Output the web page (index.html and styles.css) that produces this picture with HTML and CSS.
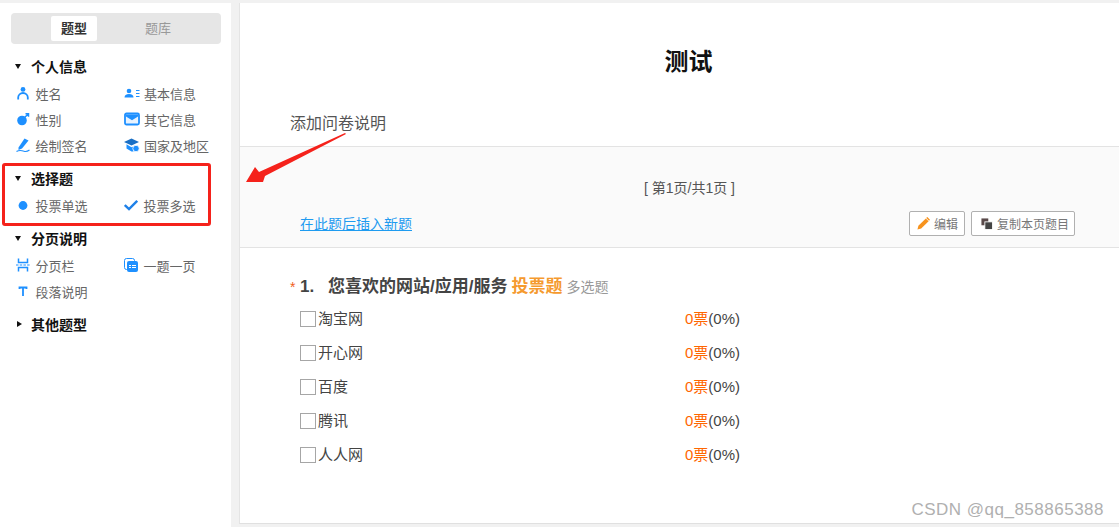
FILE: index.html
```html
<!DOCTYPE html>
<html lang="zh">
<head>
  <meta charset="UTF-8">
  <title>测试</title>
  <link rel="stylesheet" href="styles.css">
</head>
<body>
  <div class="page">
    <aside class="side">
      <div class="tabs">
        <span class="tab tab-on">题型</span>
        <span class="tab">题库</span>
      </div>

      <div class="group-title"><i class="tri"></i>个人信息</div>
      <div class="types">
        <div class="type">
          <svg class="ico" viewBox="0 0 14 14"><circle cx="7" cy="3.4" r="2.4" fill="#1e90ff"/><path d="M2.2 13.5V11.5a4.8 4.5 0 0 1 9.6 0v2" fill="none" stroke="#1e90ff" stroke-width="1.8"/></svg>
          姓名
        </div>
        <div class="type">
          <svg class="ico ico-wide" viewBox="0 0 16 14"><circle cx="5" cy="5" r="2.3" fill="#1e90ff"/><path d="M0.5 11.5a4.5 3.5 0 0 1 9 0z" fill="#1e90ff"/><path d="M12 4.5h3.5M12 7.5h3.5M12 10.5h3.5" stroke="#1e90ff" stroke-width="1.2"/></svg>
          基本信息
        </div>
        <div class="type">
          <svg class="ico" viewBox="0 0 14 14"><circle cx="6" cy="8.5" r="4.8" fill="#1e90ff"/><path d="M8.5 5.5L12 2.2M9.5 1.8h3v3" fill="none" stroke="#1e90ff" stroke-width="1.5"/></svg>
          性别
        </div>
        <div class="type">
          <svg class="ico ico-wide" viewBox="0 0 16 14"><rect x="1" y="1.5" width="14" height="11" rx="1.5" fill="#e8f3ff" stroke="#1e90ff" stroke-width="1.8"/><path d="M2 2.5H14V4.5L8 8.2L2 4.5z" fill="#1e90ff"/></svg>
          其它信息
        </div>
        <div class="type">
          <svg class="ico" viewBox="0 0 14 14"><path d="M2.5 9.5L8.5 0.5L12.5 2.5L6 10.5L2.5 12z" fill="#1e90ff"/><path d="M0.5 13.5C3 12 6 12.5 8 13.2S12 13 13.5 12" fill="none" stroke="#1e90ff" stroke-width="1.1"/></svg>
          绘制签名
        </div>
        <div class="type">
          <svg class="ico ico-wide" viewBox="0 0 16 14"><path d="M7.5 0.5L15 4L7.5 7.5L0 4z" fill="#1a6fc4"/><path d="M2.5 6.2V10.5L7.5 13.5H9.5V8.5L7.5 9.2L2.5 6.2z" fill="#1e90ff"/><circle cx="12" cy="10.5" r="3.2" fill="#1e90ff" stroke="#fff" stroke-width=".8"/></svg>
          国家及地区
        </div>
      </div>

      <div class="group-title"><i class="tri"></i>选择题</div>
      <div class="types">
        <div class="type">
          <svg class="ico" viewBox="0 0 14 14"><circle cx="7" cy="7.5" r="4.4" fill="#1e90ff"/></svg>
          投票单选
        </div>
        <div class="type">
          <svg class="ico" viewBox="0 0 14 14"><path d="M0.8 7L5 11L13.2 2.8" fill="none" stroke="#1e80e8" stroke-width="2.4"/></svg>
          投票多选
        </div>
      </div>

      <div class="group-title"><i class="tri"></i>分页说明</div>
      <div class="types">
        <div class="type">
          <svg class="ico" viewBox="0 0 14 14"><path d="M2.5 0.5V4.5H11.5V0.5M2.5 13.5V9.5H11.5V13.5" fill="none" stroke="#1e90ff" stroke-width="1.5"/><path d="M0 7H14" stroke="#1e90ff" stroke-width="1.2" stroke-dasharray="2.5 1.2"/></svg>
          分页栏
        </div>
        <div class="type">
          <svg class="ico" viewBox="0 0 14 14"><rect x="0.5" y="0.5" width="10" height="11" rx="2" fill="none" stroke="#1e90ff"/><rect x="3" y="3" width="11" height="11" rx="2" fill="#1e90ff"/><path d="M5 7.5h2M8 7.5h4M5 9.5h2M8 9.5h4" stroke="#fff"/></svg>
          一题一页
        </div>
        <div class="type">
          <svg class="ico" viewBox="0 0 14 14"><path d="M3.5 5V3.5H10.5V5M7 3.5V12" fill="none" stroke="#1e90ff" stroke-width="1.8"/></svg>
          段落说明
        </div>
      </div>

      <div class="group-title group-closed"><i class="tri tri-right"></i>其他题型</div>
    </aside>

    <main class="main">
      <h1 class="survey-title">测试</h1>
      <div class="survey-desc">添加问卷说明</div>

      <section class="page-bar">
        <div class="page-num">[ 第1页/共1页 ]</div>
        <div class="page-ops">
          <a class="insert-link" href="#">在此题后插入新题</a>
          <div class="btns">
            <span class="btn">
              <svg class="btn-ico" viewBox="0 0 14 14"><path d="M0.5 13.5L1.5 9.5L9.5 1.5L12.5 4.5L4.5 12.5z" fill="#f7931e"/><path d="M10.5 0.5L13.5 3.5" stroke="#f7931e" stroke-width="1.6"/></svg>
              编辑
            </span>
            <span class="btn btn-copy">
              <svg class="btn-ico" viewBox="0 0 14 14"><rect x="0.5" y="0.5" width="8" height="8" fill="#5a4a4a"/><rect x="4.5" y="4.5" width="9" height="9" fill="#444" stroke="#fff"/></svg>
              复制本页题目
            </span>
          </div>
        </div>
      </section>

      <section class="question">
        <div class="q-title">
          <span class="req">*</span>
          <span class="q-num">1.</span>
          <span class="q-text">您喜欢的网站/应用/服务</span>
          <span class="q-tag">投票题</span>
          <span class="q-kind">多选题</span>
        </div>
        <div class="opt"><label class="opt-name"><i class="box"></i>淘宝网</label><span class="votes"><em>0</em><b>票</b>(0%)</span></div>
        <div class="opt"><label class="opt-name"><i class="box"></i>开心网</label><span class="votes"><em>0</em><b>票</b>(0%)</span></div>
        <div class="opt"><label class="opt-name"><i class="box"></i>百度</label><span class="votes"><em>0</em><b>票</b>(0%)</span></div>
        <div class="opt"><label class="opt-name"><i class="box"></i>腾讯</label><span class="votes"><em>0</em><b>票</b>(0%)</span></div>
        <div class="opt"><label class="opt-name"><i class="box"></i>人人网</label><span class="votes"><em>0</em><b>票</b>(0%)</span></div>
      </section>
    </main>
  </div>

  <!-- annotations on top of the screenshot -->
  <div class="red-box"></div>
  <svg class="red-arrow" viewBox="0 0 100 51"><path d="M0 50L9 35L13 40L99 1L100 2L19 44L17 50z" fill="#f5221b"/></svg>
  <div class="watermark">CSDN @qq_858865388</div>
</body>
</html>
```

FILE: styles.css
```css
html, body {
  margin: 0;
  height: 100%;
  overflow: hidden;
}
body {
  background-color: #f1f1f1;
  font-family: "Liberation Sans", "Noto Sans CJK SC", sans-serif;
  color: #444;
}
.page {
  display: flex;
  height: 527px;
  padding-top: 3px;
  box-sizing: border-box;
}

/* left column */
.side {
  width: 231px;
  margin-right: 9px;
  background-color: #fff;
  padding: 10px 0 0 11px;
  box-sizing: border-box;
}
.tabs {
  display: flex;
  justify-content: center;
  width: 210px;
  height: 31px;
  background-color: #e6e6e6;
  border-radius: 4px;
  padding: 3px 0;
  box-sizing: border-box;
}
.tab {
  width: 46px;
  height: 25px;
  margin-right: 38px;
  line-height: 25px;
  text-align: center;
  font-size: 13px;
  color: #999;
  border-radius: 2px;
}
.tab:last-child {
  margin-right: 0;
}
.tab-on {
  background-color: #fff;
  color: #333;
  font-weight: bold;
}
.group-title {
  display: flex;
  align-items: center;
  height: 20px;
  margin-top: 14px;
  font-size: 14px;
  font-weight: bold;
  color: #111;
}
.tabs + .group-title {
  margin-top: 12px;
}
.group-closed {
  margin-top: 14px;
}
.tri {
  width: 0;
  height: 0;
  margin: 0 10px 0 4px;
  border-left: 3.5px solid transparent;
  border-right: 3.5px solid transparent;
  border-top: 5px solid #111;
}
.tri-right {
  margin: 0 9px 0 6px;
  border-top: 3.5px solid transparent;
  border-bottom: 3.5px solid transparent;
  border-left: 5px solid #111;
  border-right: 0;
}
.types {
  display: grid;
  grid-template-columns: 108px 100px;
  grid-auto-rows: 26px;
  margin-top: 4px;
  margin-bottom: -4px;
}
.type {
  display: flex;
  align-items: center;
  gap: 5.5px;
  padding-left: 5px;
  font-size: 13px;
  color: #666;
}
.ico {
  width: 14px;
  height: 14px;
  flex: none;
}
.ico-wide {
  width: 16px;
  margin-right: -1.5px;
}

/* survey */
.main {
  flex: 1;
  background-color: #fff;
  border-left: 1px solid #e4e4e4;
  margin-left: -1px;
  height: 520px;
  border-bottom: 1px solid #e0e0e0;
}
.survey-title {
  margin: 43px 0 0;
  padding-left: 18px;
  text-align: center;
  font-size: 24px;
  line-height: 32px;
  color: #111;
}
.survey-desc {
  margin: 34px 0 0 50px;
  font-size: 16px;
  line-height: 24px;
  color: #555;
}
.page-bar {
  margin-top: 10px;
  height: 102px;
  background-color: #fafafa;
  border-top: 1px solid #e3e3e3;
  border-bottom: 1px solid #e3e3e3;
  box-sizing: border-box;
  padding: 32px 44px 0 60px;
}
.page-num {
  margin-left: 4px;
  text-align: center;
  font-size: 14px;
  line-height: 18px;
  color: #555;
}
.page-ops {
  display: flex;
  justify-content: space-between;
  align-items: center;
  margin-top: 14px;
}
.insert-link {
  margin-bottom: 2px;
  font-size: 14px;
  color: #1e9bf0;
  text-decoration: underline;
}
.btns {
  display: flex;
  gap: 6px;
}
.btn {
  display: flex;
  align-items: center;
  gap: 4px;
  height: 25px;
  padding: 0 6px 0 7px;
  border: 1px solid #b0b0b0;
  border-radius: 2px;
  background-color: #fff;
  box-sizing: border-box;
  font-size: 12px;
  color: #777;
}
.btn-copy {
  padding-left: 9px;
  padding-right: 5px;
}
.btn-ico {
  width: 13px;
  height: 13px;
}
.btn-copy .btn-ico {
  width: 12px;
  height: 12px;
}
.question {
  padding: 27px 0 0 50px;
}
.q-title {
  display: flex;
  align-items: baseline;
  height: 24px;
  line-height: 24px;
  margin-bottom: 1px;
}
.req {
  width: 10px;
  font-size: 14px;
  color: #f0601b;
}
.q-num {
  width: 28px;
  font-size: 17px;
  font-weight: bold;
}
.q-text {
  font-size: 17px;
  font-weight: bold;
}
.q-tag {
  margin-left: 4px;
  font-size: 17px;
  font-weight: bold;
  color: #f59a2f;
}
.q-kind {
  margin-left: 4px;
  font-size: 14px;
  color: #999;
}
.opt {
  display: flex;
  align-items: center;
  height: 34px;
  padding-left: 10px;
}
.opt-name {
  display: flex;
  align-items: center;
  gap: 2px;
  width: 385px;
  font-size: 15px;
  color: #444;
}
.box {
  width: 14px;
  height: 14px;
  margin-top: 4px;
  border: 1px solid #a6a6a6;
}
.votes {
  font-size: 15px;
  color: #444;
}
.votes em {
  font-style: normal;
  color: #f60;
}
.votes b {
  font-weight: normal;
  color: #f60;
}

/* things lying over the page */
.red-box {
  position: absolute;
  left: 2px;
  top: 163px;
  width: 209px;
  height: 63px;
  box-sizing: border-box;
  border: 3px solid #f5221b;
  border-radius: 3px;
}
.red-arrow {
  position: absolute;
  left: 246px;
  top: 132px;
  width: 100px;
  height: 51px;
}
.watermark {
  position: absolute;
  right: 15px;
  top: 500px;
  font-size: 17px;
  letter-spacing: 0.5px;
  color: #b0b0b0;
}
```
